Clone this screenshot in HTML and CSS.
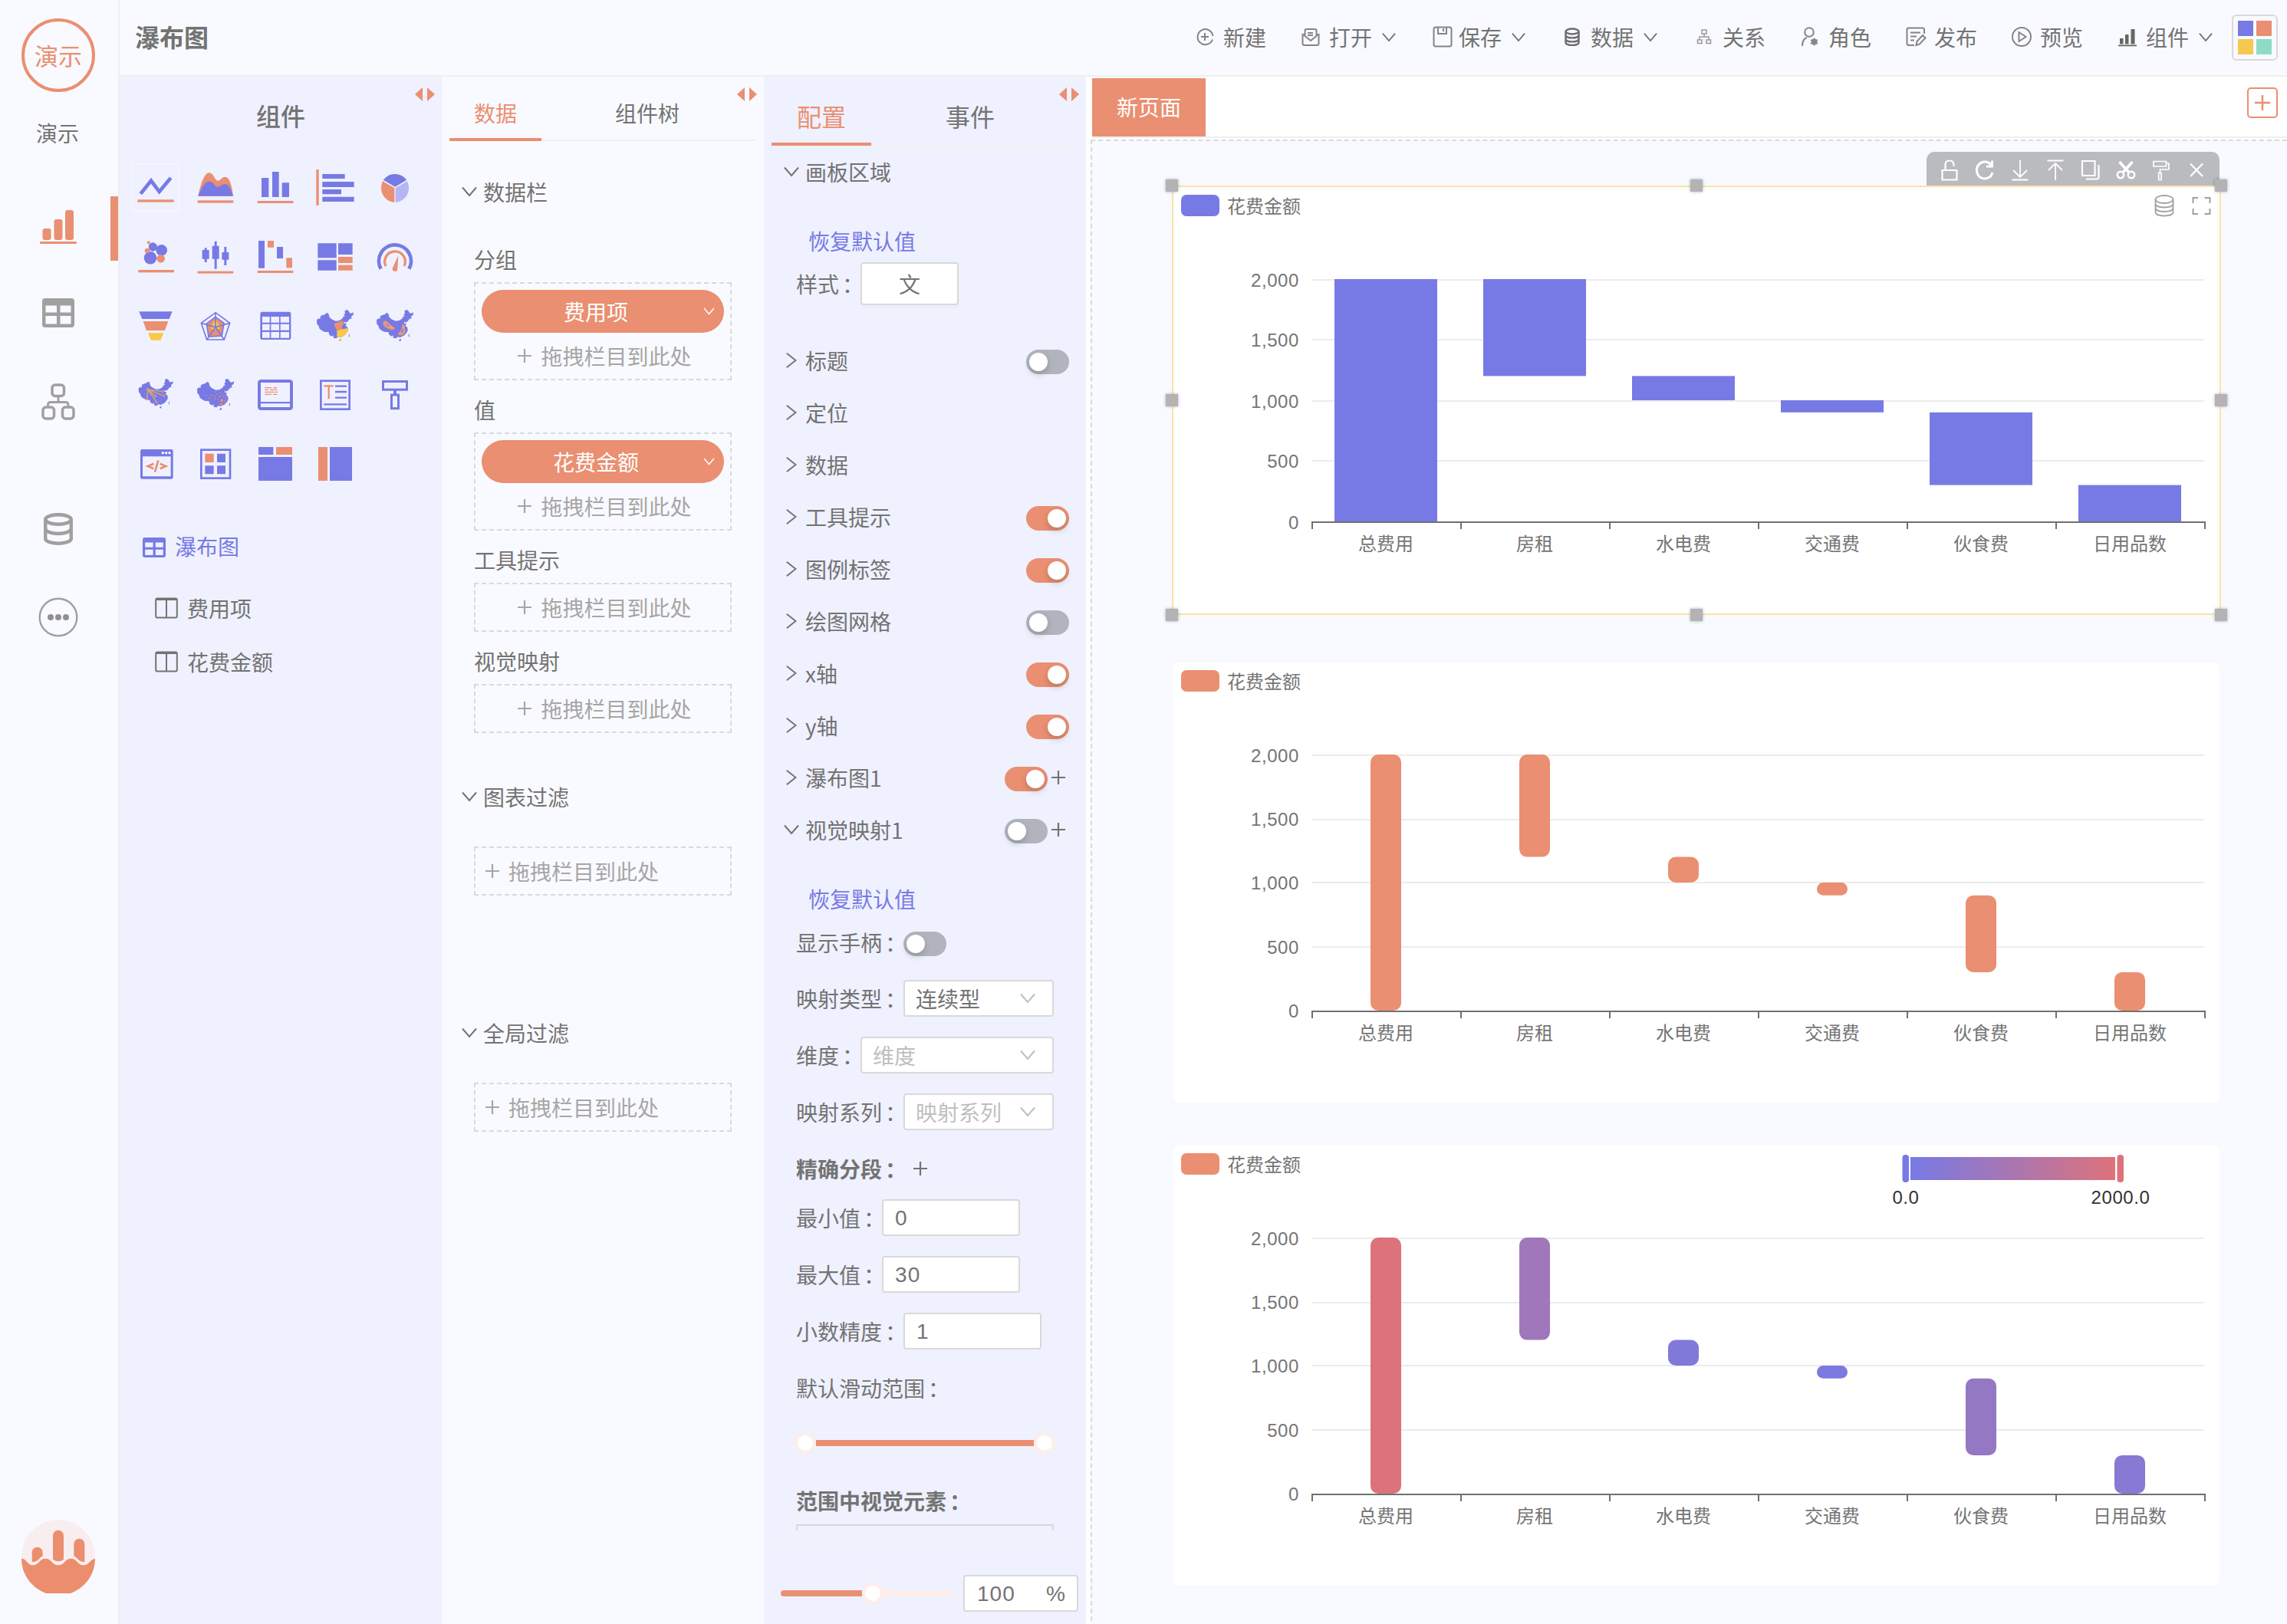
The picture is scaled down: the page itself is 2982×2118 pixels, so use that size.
FILE: index.html
```html
<!DOCTYPE html>
<html lang="zh-CN">
<head>
<meta charset="utf-8">
<title>瀑布图</title>
<link rel="stylesheet" href="styles.css">
</head>
<body>
<svg class="defs" width="0" height="0" aria-hidden="true">
  <symbol id="china" viewBox="0 0 186 186">
    <path d="M21 70L28 64L34 66L36 54L46 50L54 48L56 44L64 42L68 48L70 58L78 66L95 74L110 72L122 64L124 58L132 54L126 50L132 44L130 36L136 30L144 32L150 42L156 44L165 40L164 50L156 56L158 64L150 66L142 76L134 80L128 76L130 84L138 84L134 92L142 100L143 112L138 120L130 130L114 138L102 136L98 142L86 140L86 130L80 134L70 128L68 118L50 116L40 110L32 104L28 92L22 86Z"/>
    <path d="M146 129l4-5v8l-3 7zM109 146l9-2-3 9h-5z"/>
  </symbol>
  <symbol id="arrows" viewBox="0 0 26 18"><path d="M0 9L10 0V18zM26 9L16 0V18z" fill="#ea8f71"/></symbol>
  <symbol id="down" viewBox="0 0 20 14"><path d="M1 1.500L10 12L19 1.500" fill="none" stroke="currentColor" stroke-width="2"/></symbol>
  <symbol id="right" viewBox="0 0 14 20"><path d="M.8 .8L12.500 10L.8 19.200" fill="none" stroke="currentColor" stroke-width="2"/></symbol>
  <symbol id="plus" viewBox="0 0 18 18"><path d="M9 0V18M0 9H18" fill="none" stroke="currentColor" stroke-width="2.200"/></symbol>
  <symbol id="column" viewBox="0 0 30 28"><path d="M3 1.500H27Q28.800 1.500 28.800 3.500V24.500Q28.800 26.500 27 26.500H3Q1.200 26.500 1.200 24.500V3.500Q1.200 1.500 3 1.500ZM1.200 3H28.800M15 2V26" fill="none" stroke="currentColor" stroke-width="2"/></symbol>
</svg>

<div class="app">
  <aside class="sidebar">
    <div class="avatar">演示</div>
    <div class="user">演示</div>
    <nav class="nav">
      <a class="nav-item active"><svg width="50" height="48" viewBox="0 0 50 48" fill="#ea8f71"><rect x="4.500" y="26" width="11" height="15" rx="3"/><rect x="19.500" y="14" width="11" height="27" rx="3"/><rect x="34" y="2" width="11" height="39" rx="3"/><rect x="1" y="43" width="48" height="3" rx="1"/></svg></a>
      <a class="nav-item table"><svg width="42" height="38" viewBox="0 0 42 38"><path fill="#a0a0a0" fill-rule="evenodd" d="M4 0H38Q42 0 42 4V34Q42 38 38 38H4Q0 38 0 34V4Q0 0 4 0ZM4.500 9.500V18.500H19V9.500ZM23.500 9.500V18.500H37.500V9.500ZM4.500 23V33.500H19V23ZM23.500 23V33.500H37.500V23Z"/></svg></a>
      <a class="nav-item tree"><svg width="44" height="48" viewBox="0 0 44 48" fill="none" stroke="#a0a0a0" stroke-width="3.500"><rect x="14" y="2" width="15.500" height="14.500" rx="4"/><rect x="2" y="31" width="14.500" height="15" rx="4"/><rect x="27.500" y="31" width="14.500" height="15" rx="4"/><path d="M22 16V24M8.500 31V28Q8.500 24.500 12 24.500H31.500Q35 24.500 35 28V31" stroke-width="2.800"/></svg></a>
      <a class="nav-item store"><svg width="38" height="42" viewBox="0 0 38 42" fill="none" stroke="#a0a0a0" stroke-width="4.500"><ellipse cx="19" cy="8.500" rx="16.800" ry="6.300"/><path d="M2.200 8.500V34C4 41.500 34 41.500 35.800 34V8.500M2.200 20.500C4 29 34 29 35.800 20.500"/></svg></a>
      <a class="nav-item more"><svg width="52" height="52" viewBox="0 0 52 52"><circle cx="26" cy="26" r="24.300" fill="none" stroke="#a0a0a0" stroke-width="2.400"/><g fill="#909090"><circle cx="16" cy="26" r="4"/><circle cx="26" cy="26" r="4"/><circle cx="36" cy="26" r="4"/></g></svg></a>
    </nav>
    <svg class="brand" width="96" height="96" viewBox="84 96 288 288"><circle cx="228" cy="240" r="144" fill="#f8eef0"/><g fill="#ec8e6e"><path d="M84 248C104 248 108 274 128 274C152 274 154 248 178 248C202 248 204 274 228 274C252 274 254 248 277 248C301 248 304 274 326 274C348 274 352 251 372 248A144 144 0 0 1 84 248Z"/><path d="M125 224A21 21 0 0 1 167 224V238C154 244 150 262 125 261ZM207 158A21 21 0 0 1 249 158V251Q228 266 207 251ZM289 191A21 21 0 0 1 331 191V261C308 262 304 246 289 237Z"/></g></svg>
  </aside>

  <div class="main">
    <header class="topbar">
      <h1>瀑布图</h1>
      <div class="tools">
        <a class="tool"><svg class="ti" viewBox="0 0 28 28"><path d="M24 17.500A10 10 0 1 1 24.500 13M14 9V19M9 14H19"/></svg>新建</a>
        <a class="tool drop"><svg class="ti" viewBox="0 0 28 28"><path d="M6.500 12L3.500 11V22.500Q3.500 25 6 25H22Q24.500 25 24.500 22.500V11L21.500 12M6.500 13V6Q6.500 4 8.500 4H19.500Q21.500 4 21.500 6V13L14 19ZM10 9H17M10 12H17"/></svg>打开<svg class="chev"><use href="#down"/></svg></a>
        <a class="tool drop save"><svg class="ti" viewBox="0 0 28 28"><path d="M5 1.500H23Q25.500 1.500 25.500 4V24Q25.500 26.500 23 26.500H5Q2.500 26.500 2.500 24V4Q2.500 1.500 5 1.500ZM8 2V10H19V2M15 3V7"/></svg>保存<svg class="chev"><use href="#down"/></svg></a>
        <a class="tool drop"><svg class="ti dark" viewBox="0 0 28 28"><ellipse cx="14" cy="7" rx="8.500" ry="3.500"/><path d="M5.500 7V21.500C6 26 22 26 22.500 21.500V7M5.500 12C6 16.500 22 16.500 22.500 12M5.500 17C6 21.500 22 21.500 22.500 17"/></svg>数据<svg class="chev"><use href="#down"/></svg></a>
        <a class="tool"><svg class="ti thin" viewBox="0 0 28 28"><path d="M11 5H17V10H11ZM5.500 18H11V22.500H5.500ZM17 18H22.500V22.500H17ZM14 10V14M8 18V14H20V18"/></svg>关系</a>
        <a class="tool"><svg class="ti" viewBox="0 0 28 28"><circle cx="13" cy="8" r="5.800"/><path d="M4 26Q4 17 10 15"/><circle cx="19.500" cy="20.500" r="3"/><path d="M19.500 15.500V25.500M15 18L24 23M24 18L15 23" stroke-width="1.500"/></svg>角色</a>
        <a class="tool"><svg class="ti" viewBox="0 0 28 28"><path d="M12 25H5Q2.500 25 2.500 22.500V4.500Q2.500 2.500 5 2.500H22.500Q25 2.500 25 4.500V10M7 8.500H20M7 13.500H15M7 18.500H12M14.500 25L15.500 20L23 12L26.500 15.500L19 23.500Z"/></svg>发布</a>
        <a class="tool"><svg class="ti" viewBox="0 0 28 28"><circle cx="14" cy="14" r="12"/><path d="M10.500 8V20L19.500 14Z"/></svg>预览</a>
        <a class="tool drop"><svg class="ti" viewBox="0 0 28 28"><g fill="#666" stroke="none"><rect x="4" y="16" width="4.500" height="7.500"/><rect x="11" y="11" width="4.500" height="12.500"/><rect x="18.500" y="4" width="5" height="19.500"/><rect x="2" y="24.500" width="24" height="1.800"/></g></svg>组件<svg class="chev"><use href="#down"/></svg></a>
      </div>
      <div class="palette"><i class="c1"></i><i class="c2"></i><i class="c3"></i><i class="c4"></i></div>
    </header>

    <div class="workspace">
      <section class="panel components">
        <svg class="resize"><use href="#arrows"/></svg>
        <h2>组件</h2>
        <div class="icons">
          <svg class="first" viewBox="0 0 186 186"><path d="M34 116L75 65L107 108L152 54" fill="none" stroke="#777ae5" stroke-width="14"/><rect class="o" x="22" y="139" width="142" height="10"/></svg>
          <svg viewBox="0 0 186 186"><path class="o" d="M25 125C34 84 48 34 68 34C85 34 90 65 102 65C112 65 118 50 130 50C150 50 158 90 162 125Z"/><path class="b" d="M25 125C36 100 48 68 68 68C86 68 90 89 102 89C112 89 118 78 130 78C148 78 154 102 162 125Z"/><rect class="o" x="23" y="142" width="140" height="10"/></svg>
          <svg viewBox="0 0 186 186"><path class="b" d="M39 54h28v75h-28zM81 30h26v99h-26zM119 73h28v56h-28z"/><rect class="o" x="23" y="144" width="140" height="9"/></svg>
          <svg viewBox="0 0 186 186"><rect class="o" x="19" y="21" width="10" height="140"/><path class="b" d="M43 39h88v18h-88zM43 69h124v21h-124zM43 99h74v19h-74zM43 128h124v19h-124z"/></svg>
          <svg viewBox="0 0 186 186"><path class="b" d="M93 89L47 62A57 57 0 0 1 139 62Z"/><path class="o" d="M91 94V150A57 57 0 0 1 45 67Z"/><path d="M95 94V150A57 57 0 0 0 141 67Z" fill="#b4b5f2"/></svg>

          <svg viewBox="0 0 186 186"><g class="b"><circle cx="82" cy="54" r="17"/><circle cx="116" cy="67" r="22"/><circle cx="72" cy="97" r="25"/></g><g class="o"><circle cx="65" cy="37" r="6"/><circle cx="60" cy="69" r="10"/><circle cx="113" cy="100" r="16"/><rect x="25" y="144" width="140" height="10"/></g></svg>
          <svg viewBox="0 0 186 186"><path class="b" d="M41 66h27v35h-27zM50 58h9v56h-9zM80 50h27v51h-27zM89 32h9v108h-9zM118 75h27v29h-27zM127 54h9v72h-9z"/><rect class="o" x="23" y="149" width="140" height="9"/></svg>
          <svg viewBox="0 0 186 186"><path class="b" d="M27 30h24v107h-24zM99 54h24v45h-24z"/><path class="o" d="M63 30h24v26h-24zM136 97h23v39h-23zM23 147h140v9h-140z"/></svg>
          <svg viewBox="0 0 186 186"><path class="b" d="M25 40h73v57h-73zM25 106h73v40h-73zM105 40h56v44h-56z"/><path class="o" d="M105 93h56v24h-56zM105 125h56v21h-56z"/></svg>
          <svg viewBox="0 0 186 186"><path d="M38 140A63 63 0 1 1 148 140" fill="none" stroke="#777ae5" stroke-width="14"/><path d="M57 129A40 40 0 1 1 129 129" fill="none" stroke="#ea8f71" stroke-width="10"/><path class="o" d="M106 88L83 138A10 10 0 0 0 103 141Z"/></svg>

          <svg viewBox="0 0 186 186"><path class="b" d="M28 37H158L146 66H40Z"/><path class="o" d="M44 75H142L129 111H57Z"/><path class="y" d="M63 121H124L112 149H75Z"/></svg>
          <svg viewBox="0 0 186 186"><path class="o" d="M93 58L126 82L118 132L66 135L58 84Z"/><path class="y" d="M93 66L106 88L110 104L94 108L76 106L80 90Z"/><path d="M93 41L149 82L127 147H59L37 82ZM93 58L126 82L118 132L66 135L58 84ZM93 41V98M149 82L93 98L127 147M59 147L93 98L37 82" fill="none" stroke="#777ae5" stroke-width="5"/></svg>
          <svg viewBox="0 0 186 186"><path class="b" fill-rule="evenodd" d="M41 38H147Q154 38 154 45V140Q154 147 147 147H41Q34 147 34 140V45Q34 38 41 38ZM42 57V80H71V57ZM76 57V80H108V57ZM113 57V80H147V57ZM42 86V110H71V86ZM76 86V110H108V86ZM113 86V110H147V86ZM42 117V140H71V117ZM76 117V140H108V117ZM113 117V140H147V117Z"/></svg>
          <svg viewBox="0 0 186 186"><use class="b" href="#china"/><path class="o" d="M88 86L104 78L122 72L128 84L118 96L122 106L100 112Z"/><path class="y" d="M100 112L122 106L142 102L143 112L138 120L130 130L114 138L100 134ZM109 146l9-2-3 9h-5z"/><path class="o" d="M146 129l4-5v8l-3 7z"/></svg>
          <svg viewBox="0 0 186 186"><use class="b" href="#china"/><path d="M48 75Q60 68 70 84L92 100Q96 112 76 108L54 98Q42 86 48 75ZM124 84Q118 96 120 106L104 124Q104 132 122 130Q138 120 132 104Q134 88 124 84Z" class="o"/><path d="M54 80Q62 78 68 90L84 102L66 96Q54 92 54 80ZM125 96Q118 110 112 122Q128 124 128 108Z" fill="#777ae5" stroke="#f2b38a" stroke-width="3"/></svg>

          <svg viewBox="0 0 186 186"><use class="b" href="#china" transform="translate(6 2) scale(.94)"/><path d="M62 72L121 80M62 72L126 97M62 72L92 98M62 72L97 122M62 72L59 110" stroke="#d8a877" stroke-width="4"/><g class="o"><circle cx="62" cy="72" r="6"/><circle cx="121" cy="80" r="4.500"/><circle cx="126" cy="97" r="4.500"/><circle cx="92" cy="98" r="4.500"/><circle cx="97" cy="122" r="4.500"/><circle cx="59" cy="110" r="4.500"/></g></svg>
          <svg viewBox="0 0 186 186"><use class="b" href="#china"/><path class="o" d="M112 110h11v11h-11zM110 126h10v8h-10zM106 96h6v5h-6zM122 96h5v5h-5zM98 88h4v4h-4zM90 100h4v4h-4zM84 92h4v4h-4zM74 92h4v4h-4zM64 104h4v4h-4zM54 92h4v4h-4zM100 108h4v4h-4zM104 120h4v4h-4zM128 112h5v5h-5zM132 102h4v4h-4zM118 86h4v4h-4zM126 122h4v4h-4zM92 78h4v4h-4zM108 82h4v4h-4zM72 104h4v4h-4zM88 108h4v4h-4zM134 92h4v4h-4z"/></svg>
          <svg viewBox="0 0 186 186"><path class="b" fill-rule="evenodd" d="M38 33H148Q162 33 162 47V139Q162 153 148 153H38Q24 153 24 139V47Q24 33 38 33ZM36 45V120H150V45ZM36 127V141H150V127Z"/><path d="M52 65H78M85 65H100M52 73H66M72 73H100M52 82H88M91 82H102M52 91H78M84 91H100" stroke="#ea8f71" stroke-width="4"/></svg>
          <svg viewBox="0 0 186 186" fill="none"><rect x="37" y="38" width="112" height="111" stroke="#777ae5" stroke-width="8"/><path d="M93 59H138M93 81H138M93 104H138M49 130H138" stroke="#777ae5" stroke-width="7"/><path d="M49 58H86M68 58V109" stroke="#ea8f71" stroke-width="7"/></svg>
          <svg viewBox="0 0 186 186" fill="none" stroke="#777ae5" stroke-width="9"><rect x="46.500" y="40.500" width="93" height="32"/><path d="M93 72V92" stroke-width="12"/><rect x="79.500" y="93" width="27" height="53"/></svg>

          <svg viewBox="0 0 186 186"><path class="b" fill-rule="evenodd" d="M40 36H154Q161 36 161 43V145Q161 152 154 152H40Q33 152 33 145V43Q33 36 40 36ZM42 64V142H152V64Z"/><g fill="#fff"><circle cx="121" cy="50" r="5"/><circle cx="134" cy="50" r="5"/><circle cx="147" cy="50" r="5"/></g><path d="M85 92L62 102L85 112M103 79L90 125M110 92L133 102L110 112" fill="none" stroke="#ea8f71" stroke-width="8"/></svg>
          <svg viewBox="0 0 186 186"><rect x="37" y="38" width="113" height="111" fill="none" stroke="#777ae5" stroke-width="8"/><path class="o" d="M52 53h34v34h-34z"/><path class="b" d="M99 53h33v34h-33zM52 100h34v33h-34zM99 100h33v33h-33z"/></svg>
          <svg viewBox="0 0 186 186"><path class="b" d="M27 27h58v30h-58zM27 66h132v93h-132z"/><path class="o" d="M96 27h63v30h-63z"/></svg>
          <svg viewBox="0 0 186 186"><path class="o" d="M27 27h36v132h-36z"/><path class="b" d="M72 27h87v132h-87z"/></svg>
        </div>
        <div class="dataset"><svg width="30" height="26" viewBox="0 0 42 38" preserveAspectRatio="none"><path fill="#777ae5" fill-rule="evenodd" d="M4 0H38Q42 0 42 4V34Q42 38 38 38H4Q0 38 0 34V4Q0 0 4 0ZM4.500 9.500V18.500H19V9.500ZM23.500 9.500V18.500H37.500V9.500ZM4.500 23V33.500H19V23ZM23.500 23V33.500H37.500V23Z"/></svg><span>瀑布图</span></div>
        <div class="field"><svg width="30" height="28"><use href="#column"/></svg>费用项</div>
        <div class="field"><svg width="30" height="28"><use href="#column"/></svg>花费金额</div>
      </section>

      <section class="panel data">
        <svg class="resize"><use href="#arrows"/></svg>
        <div class="tabs"><span class="tab on">数据</span><span class="tab">组件树</span></div>
        <div class="head h1"><svg class="dn"><use href="#down"/></svg>数据栏</div>
        <div class="label first">分组</div>
        <div class="drop-zone"><div class="pill"><span>费用项</span><svg><use href="#down"/></svg></div><div class="hint"><svg><use href="#plus"/></svg>拖拽栏目到此处</div></div>
        <div class="label">值</div>
        <div class="drop-zone"><div class="pill"><span>花费金额</span><svg><use href="#down"/></svg></div><div class="hint"><svg><use href="#plus"/></svg>拖拽栏目到此处</div></div>
        <div class="label">工具提示</div>
        <div class="drop-zone"><div class="hint"><svg><use href="#plus"/></svg>拖拽栏目到此处</div></div>
        <div class="label">视觉映射</div>
        <div class="drop-zone"><div class="hint"><svg><use href="#plus"/></svg>拖拽栏目到此处</div></div>
        <div class="head h2"><svg class="dn"><use href="#down"/></svg>图表过滤</div>
        <div class="drop-zone"><div class="hint left"><svg><use href="#plus"/></svg>拖拽栏目到此处</div></div>
        <div class="head h3"><svg class="dn"><use href="#down"/></svg>全局过滤</div>
        <div class="drop-zone"><div class="hint left"><svg><use href="#plus"/></svg>拖拽栏目到此处</div></div>
      </section>

      <section class="panel config">
        <svg class="resize"><use href="#arrows"/></svg>
        <div class="tabs big"><span class="tab on">配置</span><span class="tab">事件</span></div>
        <div class="scroll">
          <div class="sec"><svg class="dn"><use href="#down"/></svg>画板区域</div>
          <div class="reset">恢复默认值</div>
          <div class="row r56">样式<span class="colon">：</span><span class="btn">文</span></div>
          <div class="sec gap"><svg class="rt"><use href="#right"/></svg>标题<i class="sw"></i></div>
          <div class="sec"><svg class="rt"><use href="#right"/></svg>定位</div>
          <div class="sec"><svg class="rt"><use href="#right"/></svg>数据</div>
          <div class="sec"><svg class="rt"><use href="#right"/></svg>工具提示<i class="sw on"></i></div>
          <div class="sec"><svg class="rt"><use href="#right"/></svg>图例标签<i class="sw on"></i></div>
          <div class="sec"><svg class="rt"><use href="#right"/></svg>绘图网格<i class="sw"></i></div>
          <div class="sec"><svg class="rt"><use href="#right"/></svg>x轴<i class="sw on"></i></div>
          <div class="sec"><svg class="rt"><use href="#right"/></svg>y轴<i class="sw on"></i></div>
          <div class="sec"><svg class="rt"><use href="#right"/></svg>瀑布图1<i class="sw on"></i><svg class="add"><use href="#plus"/></svg></div>
          <div class="sec"><svg class="dn"><use href="#down"/></svg>视觉映射1<i class="sw"></i><svg class="add"><use href="#plus"/></svg></div>
          <div class="reset">恢复默认值</div>
          <div class="row r65">显示手柄<span class="colon">：</span><i class="sw"></i></div>
          <div class="row">映射类型<span class="colon">：</span><span class="select">连续型<svg><use href="#down"/></svg></span></div>
          <div class="row">维度<span class="colon">：</span><span class="select ph">维度<svg><use href="#down"/></svg></span></div>
          <div class="row">映射系列<span class="colon">：</span><span class="select ph">映射系列<svg><use href="#down"/></svg></span></div>
          <div class="row seg"><b>精确分段</b><b class="colon">：</b><svg class="add"><use href="#plus"/></svg></div>
          <div class="row">最小值<span class="colon">：</span><span class="input">0</span></div>
          <div class="row">最大值<span class="colon">：</span><span class="input">30</span></div>
          <div class="row">小数精度<span class="colon">：</span><span class="input one">1</span></div>
          <div class="row">默认滑动范围<span class="colon">：</span></div>
          <div class="range"><i class="knob"></i><i class="bar"></i><i class="knob"></i></div>
          <div class="row elems"><b>范围中视觉元素</b><b class="colon">：</b></div>
          <div class="cut"></div>
        </div>
        <div class="zoom"><div class="zslider"><i class="bar"></i><i class="knob"></i><i class="rest"></i></div><span class="zinput"><span>100</span><span>%</span></span></div>
      </section>

      <section class="stage">
        <div class="pages"><span class="page">新页面</span><span class="newpage"><svg><use href="#plus"/></svg></span></div>
        <div class="canvas">
          <div class="card selected">
            <svg class="chart" width="1368" height="560" viewBox="1528 242 1368 560">
              <rect x="1540" y="254" width="50" height="28" rx="7" fill="#777ae5"/><text x="1600" y="278">花费金额</text>
              <g class="grid"><path d="M1710 365H2874M1710 443H2874M1710 523H2874M1710 601H2874"/></g>
              <g class="num"><text x="1694" y="373.500">2,000</text><text x="1694" y="452">1,500</text><text x="1694" y="531.500">1,000</text><text x="1694" y="610">500</text><text x="1694" y="689.500">0</text></g>
              <g fill="#777ae5"><rect x="1740" y="364" width="134" height="316"/><rect x="1934" y="364" width="134" height="126.400"/><rect x="2128" y="490.400" width="134" height="31.600"/><rect x="2322" y="522" width="134" height="15.800"/><rect x="2516" y="537.800" width="134" height="94.800"/><rect x="2710" y="632.600" width="134" height="47.400"/></g>
              <path class="axis" d="M1710 681H2876M1711 681V690M1905 681V690M2099 681V690M2293 681V690M2487 681V690M2681 681V690M2875 681V690"/>
              <g class="cat"><text x="1807" y="718">总费用</text><text x="2001" y="718">房租</text><text x="2195" y="718">水电费</text><text x="2389" y="718">交通费</text><text x="2583" y="718">伙食费</text><text x="2777" y="718">日用品数</text></g>
              <g fill="none" stroke="#a0a0a0" stroke-width="1.800"><ellipse cx="2822" cy="260" rx="11.500" ry="5"/><path d="M2810.500 260V277C2812 283 2832 283 2833.500 277V260M2810.500 266C2812 272 2832 272 2833.500 266M2810.500 271.500C2812 277.500 2832 277.500 2833.500 271.500"/><path d="M2859.500 265V258H2866M2874.500 258H2881.500V265M2881.500 272V279H2874.500M2866 279H2859.500V272" stroke-width="2"/></g>
            </svg>
            <div class="ops">
              <svg viewBox="0 0 26 28"><path d="M3.500 14H22.500V26.500H3.500ZM7.500 14V7Q7.500 1.500 13 1.500Q18.500 1.500 18.500 7V9"/></svg>
              <svg viewBox="0 0 26 28"><path d="M22 8.500A10.500 11 0 1 0 23 17M22.500 1.500V9H15" stroke-width="3"/></svg>
              <svg viewBox="0 0 26 28"><path d="M13 1V23M4 14L13 23L22 14M2.500 26.500H23.500" stroke-width="1.800"/></svg>
              <svg viewBox="0 0 26 28"><path d="M13 27V5M4 14L13 5L22 14M2.500 1.500H23.500" stroke-width="1.800"/></svg>
              <svg viewBox="0 0 26 28"><path d="M2 2H18.500V21H2ZM23.500 7V23Q23.500 25.500 21 25.500H7"/></svg>
              <svg viewBox="0 0 26 28"><circle cx="6" cy="20" r="4.200" stroke-width="2.600"/><circle cx="20" cy="20" r="4.200" stroke-width="2.600"/><path d="M4.500 3L17 17M21.500 3L9 17" stroke-width="3.600"/></svg>
              <svg viewBox="0 0 26 28"><path d="M3 2.500H19.500V9H3ZM20 5H23V13H11.500V17M9.700 17.500H13V26.500H9.700Z" stroke-width="1.700"/></svg>
              <svg viewBox="0 0 26 28"><path d="M5 5.500L21 22M21 5.500L5 22"/></svg>
            </div>
            <i class="grip tl"></i><i class="grip tc"></i><i class="grip tr"></i><i class="grip ml"></i><i class="grip mr"></i><i class="grip bl"></i><i class="grip bc"></i><i class="grip br"></i>
          </div>

          <div class="card">
            <svg class="chart" width="1364" height="574" viewBox="1530 864 1364 574">
              <rect x="1540" y="874" width="50" height="28" rx="7" fill="#ea8f71"/><text x="1600" y="898">花费金额</text>
              <g class="grid"><path d="M1710 985H2874M1710 1069H2874M1710 1151H2874M1710 1235H2874"/></g>
              <g class="num"><text x="1694" y="993.500">2,000</text><text x="1694" y="1077">1,500</text><text x="1694" y="1160">1,000</text><text x="1694" y="1243.500">500</text><text x="1694" y="1327">0</text></g>
              <g fill="#ea8f71"><rect x="1787" y="984" width="40" height="334" rx="10"/><rect x="1981" y="984" width="40" height="133.600" rx="10"/><rect x="2175" y="1117.600" width="40" height="33.400" rx="10"/><rect x="2369" y="1151" width="40" height="16.700" rx="8.300"/><rect x="2563" y="1167.700" width="40" height="100.200" rx="10"/><rect x="2757" y="1267.900" width="40" height="50.100" rx="10"/></g>
              <path class="axis" d="M1710 1319H2876M1711 1319V1328M1905 1319V1328M2099 1319V1328M2293 1319V1328M2487 1319V1328M2681 1319V1328M2875 1319V1328"/>
              <g class="cat"><text x="1807" y="1356">总费用</text><text x="2001" y="1356">房租</text><text x="2195" y="1356">水电费</text><text x="2389" y="1356">交通费</text><text x="2583" y="1356">伙食费</text><text x="2777" y="1356">日用品数</text></g>
            </svg>
          </div>

          <div class="card">
            <svg class="chart" width="1364" height="574" viewBox="1530 1494 1364 574">
              <defs><linearGradient id="heat"><stop offset="0" stop-color="#777ae5"/><stop offset="1" stop-color="#dd727b"/></linearGradient></defs>
              <rect x="1540" y="1504" width="50" height="28" rx="7" fill="#ea8f71"/><text x="1600" y="1528">花费金额</text>
              <rect x="2491" y="1509" width="267" height="30" fill="url(#heat)"/><rect x="2480.500" y="1506" width="8.500" height="36" rx="4" fill="#777ae5"/><rect x="2760.500" y="1506" width="8.500" height="36" rx="4" fill="#dd727b"/>
              <g class="vm"><text x="2485" y="1569.500">0.0</text><text x="2765" y="1569.500">2000.0</text></g>
              <g class="grid"><path d="M1710 1615H2874M1710 1699H2874M1710 1781H2874M1710 1865H2874"/></g>
              <g class="num"><text x="1694" y="1623.500">2,000</text><text x="1694" y="1707">1,500</text><text x="1694" y="1790">1,000</text><text x="1694" y="1873.500">500</text><text x="1694" y="1957">0</text></g>
              <rect x="1787" y="1614" width="40" height="334" rx="10" fill="#dd727b"/><rect x="1981" y="1614" width="40" height="133.600" rx="10" fill="#a077bb"/><rect x="2175" y="1747.600" width="40" height="33.400" rx="10" fill="#8179da"/><rect x="2369" y="1781" width="40" height="16.700" rx="8.300" fill="#7c7ae0"/><rect x="2563" y="1797.700" width="40" height="100.200" rx="10" fill="#9478c4"/><rect x="2757" y="1897.900" width="40" height="50.100" rx="10" fill="#8779d4"/>
              <path class="axis" d="M1710 1949H2876M1711 1949V1958M1905 1949V1958M2099 1949V1958M2293 1949V1958M2487 1949V1958M2681 1949V1958M2875 1949V1958"/>
              <g class="cat"><text x="1807" y="1986">总费用</text><text x="2001" y="1986">房租</text><text x="2195" y="1986">水电费</text><text x="2389" y="1986">交通费</text><text x="2583" y="1986">伙食费</text><text x="2777" y="1986">日用品数</text></g>
            </svg>
          </div>
        </div>
      </section>
    </div>
  </div>
</div>
</body>
</html>
```
FILE: styles.css
```css
* { box-sizing: border-box; }
body {
  margin: 0;
  width: 2982px;
  height: 2118px;
  overflow: hidden;
  background: #f9faff;
  color: #737373;
  font: 28px/1.5 "Noto Sans CJK SC", "Liberation Sans", sans-serif;
}
svg { display: block; flex: none; }
i { display: block; flex: none; }
.defs { position: absolute; }
.app { display: flex; height: 2118px; }

/* left navigation */
.sidebar {
  width: 156px;
  flex: none;
  border-right: 2px solid #efeff1;
  display: flex;
  flex-direction: column;
  align-items: center;
  padding: 24px 2px 40px 0;
}
.avatar {
  width: 96px;
  height: 96px;
  border: 4px solid #ea8f71;
  border-radius: 50%;
  color: #ea8f71;
  font-size: 31px;
  line-height: 87px;
  text-align: center;
}
.user { margin-top: 32px; line-height: 42px; padding-right: 2px; }
.nav { width: 154px; margin-right: -2px; margin-top: 62px; display: flex; flex-direction: column; }
.nav-item { height: 84px; display: flex; align-items: center; justify-content: center; padding-right: 2px; }
.nav-item.active { border-right: 10px solid #ea8f71; padding: 0 0 5px 8px; }
.nav-item.table { margin-top: 26px; }
.nav-item.tree { margin-top: 32px; }
.nav-item.store { margin-top: 82px; }
.nav-item.more { margin-top: 31px; }
.brand { margin-top: auto; }

/* top bar */
.main { flex: 1; display: flex; flex-direction: column; min-width: 0; }
.topbar {
  height: 100px;
  border-bottom: 2px solid #efeff1;
  display: flex;
  align-items: center;
  padding: 0 12px 2px 20px;
  flex: none;
}
.topbar h1 { margin: 0 0 2px; font-size: 32px; line-height: 48px; font-weight: 700; }
.tools { margin-left: auto; display: flex; gap: 44px; }
.tool { display: flex; align-items: center; width: 94px; line-height: 42px; white-space: nowrap; }
.tool.drop { width: 128px; }
.ti { width: 28px; height: 28px; margin-right: 10px; fill: none; stroke: #848484; stroke-width: 2; }
.ti.dark { stroke: #6c6c6c; stroke-width: 2.4; }
.ti.thin { stroke: #999; stroke-width: 1.5; }
.tool.save { width: 125px; }
.save .ti { margin-right: 7px; }
.chev { width: 18px; height: 13px; margin-left: 13px; }
.palette {
  width: 60px;
  height: 60px;
  margin: 2px 0 0 22px;
  padding: 6px;
  border: 2px solid #d9d9d9;
  border-radius: 6px;
  display: grid;
  grid-template-columns: 20px 20px;
  gap: 4px;
}
.palette i { height: 20px; }
.c1 { background: #777ae5; }
.c2 { background: #ea8f71; }
.c3 { background: #f5c84f; }
.c4 { background: #8edcc6; }

/* panels */
.workspace { flex: 1; display: flex; min-height: 0; }
.panel { width: 420px; flex: none; position: relative; }
.components, .config { background: #eff1fe; }
.resize { position: absolute; right: 9px; top: 14px; width: 26px; height: 18px; }
.components h2 { margin: 26px 0 0; text-align: center; font-size: 32px; line-height: 48px; font-weight: 500; }
.icons { display: grid; grid-template-columns: repeat(5, 62px); grid-auto-rows: 62px; gap: 28px 16px; padding: 40px 0 0 16px; }
.icons svg { width: 62px; height: 62px; }
.icons .first { outline: 1px solid #f9faff; outline-offset: -1px; }
.b { fill: #777ae5; }
.o { fill: #ea8f71; }
.y { fill: #f8c846; }
.dataset { display: flex; align-items: center; height: 70px; margin-top: 43px; padding-left: 30px; gap: 12px; color: #777ae5; }
.dataset span { padding-bottom: 4px; }
.field { display: flex; align-items: center; height: 70px; padding-left: 46px; gap: 12px; }
.dataset + .field { margin-top: 9px; }

.tabs { display: flex; margin: 0 10px; height: 84px; border-bottom: 2px solid #efeff1; gap: 64px; }
.tab { height: 84px; padding: 26px 32px 0; line-height: 42px; }
.tab.on { color: #ea8f71; border-bottom: 4px solid #ea8f71; }
.tabs.big { height: 90px; border-color: #f2f1f4; font-size: 32px; }
.big .tab { height: 90px; padding: 27px 33px 0; line-height: 48px; }
.dn { width: 20px; height: 14px; margin-right: 8px; }
.rt { width: 14px; height: 20px; margin: 0 11px 0 3px; }

.head { display: flex; align-items: center; height: 42px; margin-left: 26px; }
.h1 { margin-top: 45px; }
.h2 { margin-top: 62px; margin-bottom: 44px; }
.h3 { margin-top: 158px; margin-bottom: 44px; }
.label { height: 68px; padding: 17px 0 0 42px; line-height: 42px; }
.label.first { margin-top: 29px; }
.drop-zone { margin: 0 42px; border: 2px dashed #d9d9d9; }
.pill { height: 56px; margin: 8px 8px 0; border-radius: 28px; background: #ea8f71; color: #fff; display: flex; align-items: center; padding: 0 12px 0 0; }
.pill span { flex: 1; text-align: center; padding-left: 9px; }
.pill svg { width: 15px; height: 10px; }
.hint { height: 60px; display: flex; align-items: center; justify-content: center; color: #a6a6a6; gap: 12px; padding-left: 5px; }
.hint.left { justify-content: flex-start; padding-left: 13px; }
.hint svg, .add { width: 18px; height: 18px; }

/* configuration form */
.scroll { height: 1806px; overflow: hidden; }
.sec { display: flex; align-items: center; height: 68px; padding: 0 22px 0 26px; }
.sec.gap { margin-top: 38px; }
.sec .sw { margin-left: auto; }
.sec .add { margin: 0 5px; }
.sw { width: 56px; height: 32px; border-radius: 16px; background: #b1b4bd; padding: 4px; position: relative; top: 2px; }
.sw::before { content: ""; display: block; width: 24px; height: 24px; border-radius: 50%; background: #fff; box-shadow: 0 4px 8px rgba(0, 35, 11, .2); }
.sw.on { background: #ea8f71; }
.sw.on::before { margin-left: auto; }
.reset { margin: 28px 0 0 58px; line-height: 56px; color: #777ae5; }
.row { display: flex; align-items: center; height: 74px; padding: 0 42px; white-space: nowrap; }
.colon { width: 28px; flex: none; padding-left: 4px; }
.row.r56 { height: 56px; }
.row.r65 { height: 65px; padding-bottom: 7px; }
.btn { width: 128px; height: 56px; border: 2px solid #d9d9d9; border-radius: 4px; background: #fff; text-align: center; line-height: 52px; box-shadow: 0 4px 0 rgba(0, 0, 0, .015); }
.select { flex: 1; height: 48px; border: 2px solid #d9d9d9; border-radius: 4px; background: #fff; display: flex; align-items: center; justify-content: space-between; padding: 0 22px 0 14px; }
.select svg { width: 20px; height: 14px; color: #bfbfbf; }
.ph { color: #bfbfbf; }
.input { width: 180px; height: 48px; border: 2px solid #d9d9d9; border-radius: 4px; background: #fff; padding-left: 15px; line-height: 45px; font-family: "Liberation Sans", sans-serif; letter-spacing: 1.2px; }
.row.seg { height: 64px; padding-top: 10px; }
.seg .add { margin-left: 13px; }
.range { height: 70px; padding: 0 40px; display: flex; align-items: center; }
.knob { width: 28px; height: 28px; border: 4px solid #fdeeea; border-radius: 50%; background: #fff; }
.range .bar { flex: 1; height: 8px; background: #ea8f71; }
.row.elems { height: 71px; padding-top: 8px; }
.cut { height: 8px; margin: 0 42px; border: 2px solid #d9d9d9; border-bottom: 0; }
.zoom { margin: 20px 10px 0; border-top: 2px solid #f2f1f4; height: 102px; padding: 20px 0 0 12px; display: flex; align-items: center; }
.zslider { width: 226px; display: flex; align-items: center; margin-right: 12px; }
.zslider .bar { width: 106px; height: 8px; border-radius: 4px 0 0 4px; background: #ea8f71; }
.zslider .rest { flex: 1; height: 8px; border-radius: 0 4px 4px 0; background: #fdeeea; }
.zinput { width: 150px; height: 48px; border: 2px solid #d9d9d9; border-radius: 4px; background: #fff; display: flex; justify-content: space-between; align-items: center; padding: 1px 14px 0 16px; font-family: "Liberation Sans", sans-serif; letter-spacing: 1px; }

/* stage */
.stage { flex: 1; min-width: 0; display: flex; flex-direction: column; background: #fff; padding-left: 6px; }
.pages { height: 80px; margin-left: 2px; border-bottom: 2px solid #efeff1; display: flex; justify-content: space-between; padding: 2px 12px 0 0; }
.page { width: 148px; height: 76px; background: #ea8f71; color: #fff; text-align: center; line-height: 75px; }
.newpage { width: 40px; height: 40px; margin-top: 12px; border: 2px solid #ea8f71; border-radius: 5px; color: #ea8f71; display: flex; align-items: center; justify-content: center; }
.newpage svg { width: 20px; height: 20px; }
.canvas { flex: 1; margin-top: 2px; border: 2px dashed #d9d9d9; border-right: 0; border-bottom: 0; background: #f9faff; padding: 58px 0 0 104px; }
.card { width: 1364px; height: 574px; margin: 0 0 56px 2px; border-radius: 8px; background: #fff; position: relative; }
.selected { width: 1368px; height: 560px; margin: 0 0 62px; border-radius: 0; }
.selected::after { content: ""; position: absolute; inset: 0; border: 2px solid #fae3a5; }
.chart { font-size: 24px; }
.chart text { fill: #757575; }
.grid { stroke: #ececee; stroke-width: 2; }
.axis { stroke: #707072; stroke-width: 2; fill: none; }
.num { text-anchor: end; font-family: "Liberation Sans", sans-serif; letter-spacing: .6px; }
.cat { text-anchor: middle; }
.vm { text-anchor: middle; font-family: "Liberation Sans", sans-serif; letter-spacing: .6px; }
.vm text { fill: #333; }
.ops { position: absolute; right: 2px; top: -44px; width: 382px; height: 44px; border-radius: 10px 10px 0 0; background: #babbbf; display: flex; align-items: center; gap: 20px; padding: 4px 17px 0; }
.ops svg { width: 26px; height: 28px; fill: none; stroke: #fff; stroke-width: 2.2; }
.grip { position: absolute; z-index: 1; width: 16px; height: 16px; margin: -8px; background: #b3b3b3; box-shadow: 0 0 4px rgba(0, 0, 0, .3); }
.tl { left: 0; top: 0; }
.tc { left: 50%; top: 0; }
.tr { left: 100%; top: 0; }
.ml { left: 0; top: 50%; }
.mr { left: 100%; top: 50%; }
.bl { left: 0; top: 100%; }
.bc { left: 50%; top: 100%; }
.br { left: 100%; top: 100%; }
```
